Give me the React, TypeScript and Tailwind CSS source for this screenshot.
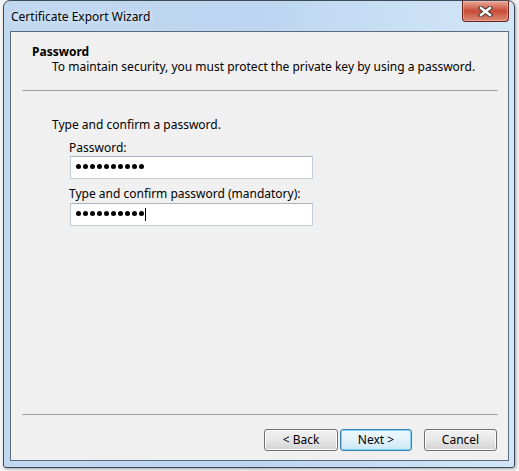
const font = { fontFamily: '"Segoe UI", "Noto Sans", sans-serif' }

function CloseButton() {
  return (
    <div className="absolute right-[5px] top-0 w-[47px] h-[21px] rounded-b-[4px] border border-t-0 border-[#6b2218] bg-gradient-to-b from-[#e9a99b] via-[#c94a36] to-[#d98a76] flex items-center justify-center shadow-[inset_0_0_0_1px_rgba(255,200,190,0.45)]">
      <svg width="15" height="11" viewBox="0 0 15 11">
        <path d="M3 2 L12 9 M12 2 L3 9" stroke="#3a3a3a" strokeWidth="4.5" strokeLinecap="square" />
        <path d="M3 2 L12 9 M12 2 L3 9" stroke="#ffffff" strokeWidth="2.5" strokeLinecap="square" />
      </svg>
    </div>
  )
}

function PasswordBox({ caret }: { caret?: boolean }) {
  return (
    <div className="ml-[59px] w-[243px] h-[23px] bg-white border border-[#c2ccd8] border-t-[#abb5c2] flex items-center pl-[5px] pb-[2px]">
      <div className="flex gap-[2px]">
        {Array.from({ length: 10 }).map((_, i) => (
          <span key={i} className="block w-[5px] h-[5px] rounded-full bg-black" />
        ))}
      </div>
      {caret && <span className="block ml-[1px] w-px h-[13px] bg-black mt-[2px]" />}
    </div>
  )
}

function WinButton({ label, primary, width }: { label: string; primary?: boolean; width: string }) {
  return (
    <button
      className={`${width} h-[22px] rounded-[3px] border text-[12px] leading-none text-black ${
        primary
          ? 'border-[#3c7fb1] bg-gradient-to-b from-[#eef8fd] via-[#e3f2fb] to-[#cbe6f6] shadow-[inset_0_0_0_1px_#7fd3f6]'
          : 'border-[#707070] bg-gradient-to-b from-[#f2f2f2] via-[#e7e7e7] to-[#d2d2d2] shadow-[inset_0_0_0_1px_#fcfcfc]'
      }`}
      style={font}
    >
      {label}
    </button>
  )
}

export default function App() {
  return (
    <div className="w-[519px] h-[471px] bg-[#f4f4f4] overflow-hidden" style={font}>
      <div className="relative ml-[3px] w-[512px] h-[468px] rounded-t-[7px] rounded-b-[3px] border border-[#3f4a57] bg-gradient-to-r from-[#c1d8f0] via-[#bcd6f1] to-[#d3e6f8] flex flex-col pl-[6px] pr-[5px] pb-[6px] shadow-[1px_1px_3px_rgba(0,0,0,0.35)]">
        <div className="h-[30px] flex items-center pl-[1px] pt-[2px] text-[12px] text-black [text-shadow:0_0_6px_rgba(255,255,255,0.9)]">
          Certificate Export Wizard
        </div>
        <CloseButton />
        <div className="flex-1 border border-[#5d6b7a] bg-[#f0f0f0] flex flex-col text-[12px] text-black">
          <div className="pt-[12px] pl-[21px] font-bold leading-[15px]">Password</div>
          <div className="pl-[41px] leading-[15px]">
            To maintain security, you must protect the private key by using a password.
          </div>
          <div className="mt-[16px] ml-[11px] mr-[10px] h-px bg-[#a0a0a0]" />

          <div className="mt-[26px] pl-[41px] leading-[16px]">Type and confirm a password.</div>
          <div className="mt-[7px] pl-[58px] leading-[16px]">Password:</div>
          <PasswordBox />
          <div className="mt-[7px] pl-[58px] leading-[16px]">Type and confirm password (mandatory):</div>
          <div className="mt-[1px]">
            <PasswordBox caret />
          </div>

          <div className="flex-1" />
          <div className="ml-[11px] mr-[10px] h-px bg-[#a0a0a0]" />
          <div className="flex justify-end items-center pt-[14px] pb-[9px] pr-[11px]">
            <WinButton label="< Back" width="w-[74px]" />
            <div className="ml-[2px]">
              <WinButton label="Next >" primary width="w-[72px]" />
            </div>
            <div className="ml-[12px]">
              <WinButton label="Cancel" width="w-[73px]" />
            </div>
          </div>
        </div>
      </div>
    </div>
  )
}
